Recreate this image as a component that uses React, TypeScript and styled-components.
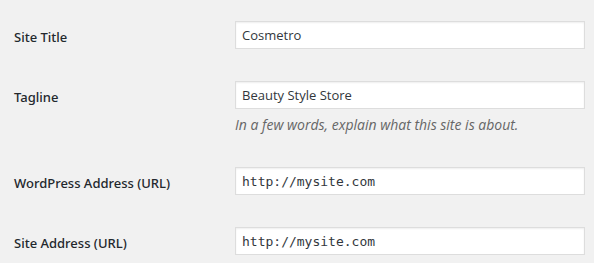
import styled, { createGlobalStyle } from 'styled-components'

const GlobalStyle = createGlobalStyle`
  body {
    margin: 0;
    background: #f1f1f1;
    font-family: 'Open Sans', 'Noto Sans', sans-serif;
    color: #23282d;
  }
`

type Field = {
  label: string
  value: string
  mono?: boolean
  description?: string
}

const fields: Field[] = [
  { label: 'Site Title', value: 'Cosmetro' },
  {
    label: 'Tagline',
    value: 'Beauty Style Store',
    description: 'In a few words, explain what this site is about.',
  },
  { label: 'WordPress Address (URL)', value: 'http://mysite.com', mono: true },
  { label: 'Site Address (URL)', value: 'http://mysite.com', mono: true },
]

export default function App() {
  return (
    <>
      <GlobalStyle />
      <StyledForm>
        {fields.map((field) => (
          <StyledRow key={field.label}>
            <StyledLabel>{field.label}</StyledLabel>
            <StyledCell>
              <StyledInput $mono={field.mono} defaultValue={field.value} />
              {field.description ? (
                <StyledDescription>{field.description}</StyledDescription>
              ) : null}
            </StyledCell>
          </StyledRow>
        ))}
      </StyledForm>
    </>
  )
}

const StyledForm = styled.div`
  padding: 5px 0 0 14px;
`

const StyledRow = styled.div`
  display: grid;
  grid-template-columns: 221px 350px;
  padding: 16px 0;
`

const StyledLabel = styled.label`
  padding-top: 6px;
  font-family: 'Noto Sans', 'Open Sans', sans-serif;
  font-size: 13px;
  font-weight: 500;
  line-height: 20px;
  color: #23282d;
`

const StyledCell = styled.div`
  display: flex;
  flex-direction: column;
`

const StyledInput = styled.input<{ $mono?: boolean }>`
  box-sizing: border-box;
  width: 350px;
  height: 28px;
  margin: 0;
  padding: 0 6px;
  border: 1px solid #ddd;
  background: #fff;
  box-shadow: inset 0 1px 2px rgba(0, 0, 0, 0.07);
  color: #32373c;
  font-family: ${(p) =>
    p.$mono ? "'DejaVu Sans Mono', 'Liberation Mono', monospace" : "'Open Sans', 'Noto Sans', sans-serif"};
  font-size: 13px;
  outline: none;
`

const StyledDescription = styled.p`
  margin: 6px 0 0;
  font-size: 14px;
  font-style: italic;
  line-height: 20px;
  color: #666;
`
